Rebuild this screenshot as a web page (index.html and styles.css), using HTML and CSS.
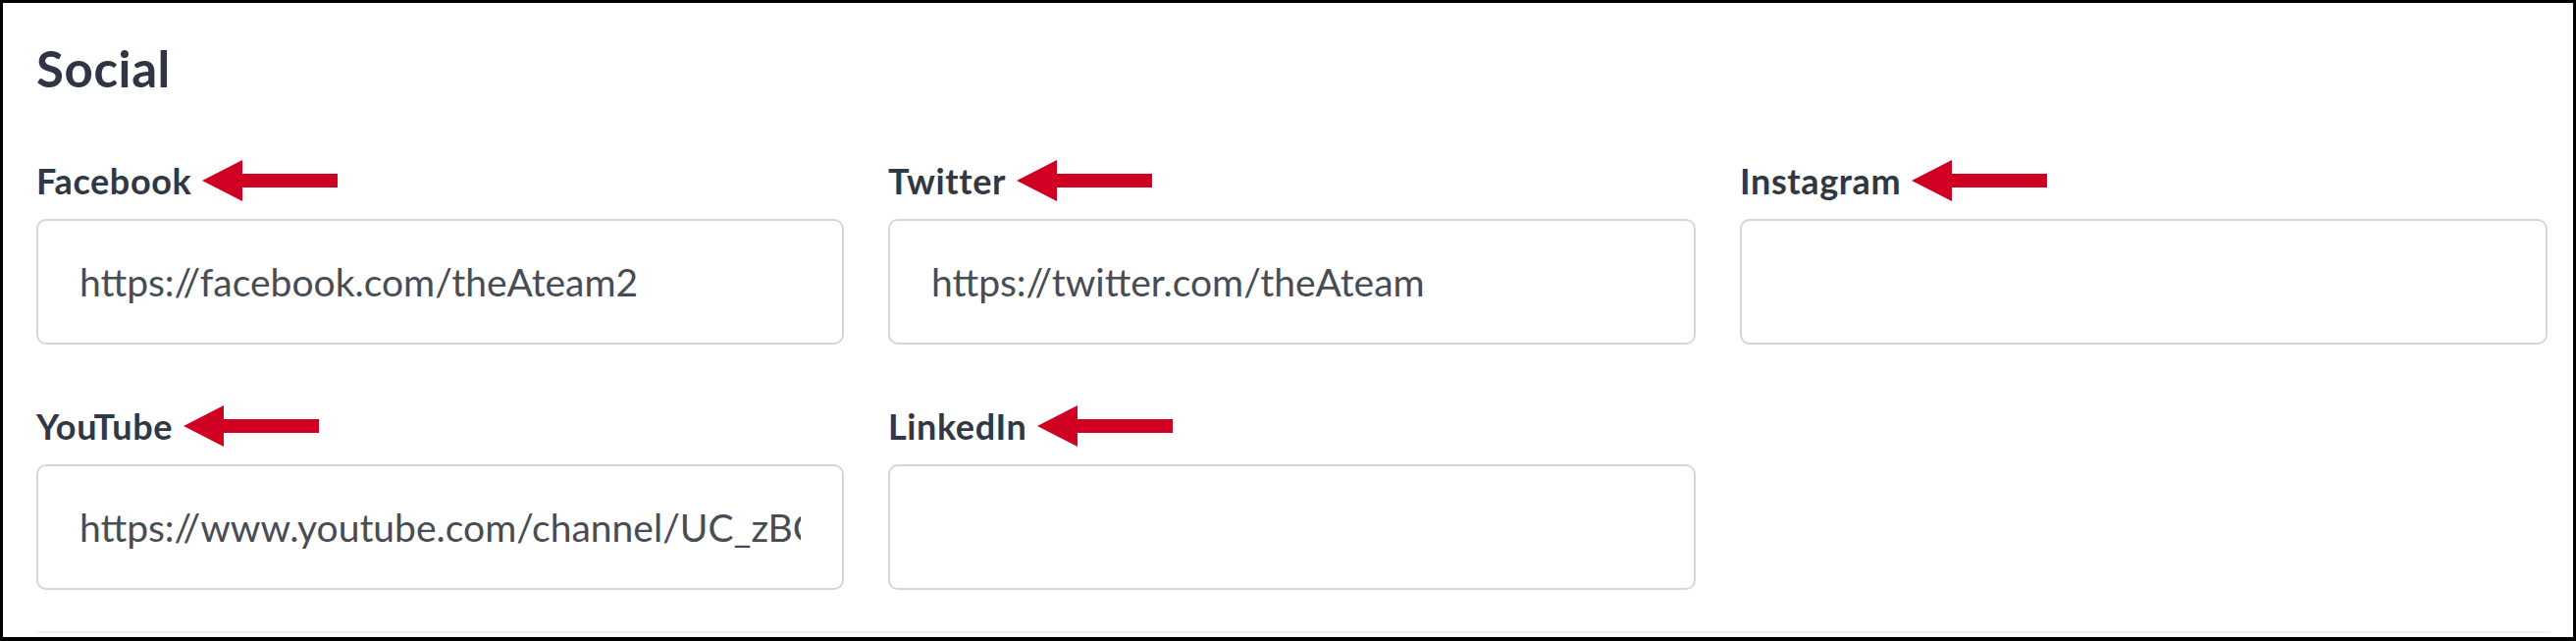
FILE: index.html
```html
<!DOCTYPE html>
<html lang="en">
<head>
    <meta charset="UTF-8">
    <meta name="viewport" content="width=device-width, initial-scale=1.0">
    <title>Social</title>
    <link rel="stylesheet" href="styles.css">
</head>
<body>

    <!-- Social links panel -->
    <div class="panel">
        <h2 class="panel-title">Social</h2>

        <div class="field-grid">
            <div class="field">
                <div class="field-label">
                    <label for="facebook">Facebook</label>
                    <svg class="pointer" viewBox="0 0 138 42" width="138" height="42"><polygon points="0,21 41,0 41,14 138,14 138,28 41,28 41,42"/></svg>
                </div>
                <input id="facebook" class="field-input" type="text" value="https://facebook.com/theAteam2" readonly>
            </div>

            <div class="field">
                <div class="field-label">
                    <label for="twitter">Twitter</label>
                    <svg class="pointer" viewBox="0 0 138 42" width="138" height="42"><polygon points="0,21 41,0 41,14 138,14 138,28 41,28 41,42"/></svg>
                </div>
                <input id="twitter" class="field-input" type="text" value="https://twitter.com/theAteam" readonly>
            </div>

            <div class="field">
                <div class="field-label">
                    <label for="instagram">Instagram</label>
                    <svg class="pointer" viewBox="0 0 138 42" width="138" height="42"><polygon points="0,21 41,0 41,14 138,14 138,28 41,28 41,42"/></svg>
                </div>
                <input id="instagram" class="field-input" type="text" value="" readonly>
            </div>

            <div class="field">
                <div class="field-label">
                    <label for="youtube">YouTube</label>
                    <svg class="pointer" viewBox="0 0 138 42" width="138" height="42"><polygon points="0,21 41,0 41,14 138,14 138,28 41,28 41,42"/></svg>
                </div>
                <input id="youtube" class="field-input" type="text" value="https://www.youtube.com/channel/UC_zBC4xQ9sLm2Tn" readonly>
            </div>

            <div class="field">
                <div class="field-label">
                    <label for="linkedin">LinkedIn</label>
                    <svg class="pointer" viewBox="0 0 138 42" width="138" height="42"><polygon points="0,21 41,0 41,14 138,14 138,28 41,28 41,42"/></svg>
                </div>
                <input id="linkedin" class="field-input" type="text" value="" readonly>
            </div>
        </div>

        <!-- next section starts just below -->
        <div class="next-section"></div>
    </div>

</body>
</html>
```

FILE: styles.css
```css
body {
    margin: 0;
    background: #fff;
    font-family: 'Lato', 'Liberation Sans', sans-serif;
}

.panel {
    box-sizing: border-box;
    width: 2625px;
    height: 653px;
    border: 3px solid #000;
    border-bottom-width: 4px;
    padding: 37px 29px 0 34px;
    overflow: hidden;
}

.panel-title {
    margin: 0 0 63px;
    font-size: 51px;
    line-height: 60px;
    font-weight: 700;
    letter-spacing: 0.6px;
    color: #2f3542;
}

.field-grid {
    display: grid;
    grid-template-columns: repeat(3, 823px);
    column-gap: 45px;
    row-gap: 62px;
}

.field-label {
    display: flex;
    align-items: center;
    height: 42px;
    margin-bottom: 18px;
}

.field-label label {
    font-size: 36px;
    line-height: 42px;
    font-weight: 700;
    letter-spacing: 0.6px;
    color: #313843;
}

.pointer {
    margin-left: 11px;
    fill: #cf0022;
}

.field-input {
    box-sizing: border-box;
    display: block;
    width: 100%;
    height: 128px;
    padding: 0 42px;
    border: 2px solid #d3d6da;
    border-radius: 10px;
    background: #fff;
    font-family: 'Lato', 'Liberation Sans', sans-serif;
    font-size: 39px;
    color: #474c55;
    outline: none;
}

.next-section {
    margin-top: 42px;
    width: 2562px;
    border-top: 2px solid #f1f1f1;
}
```
